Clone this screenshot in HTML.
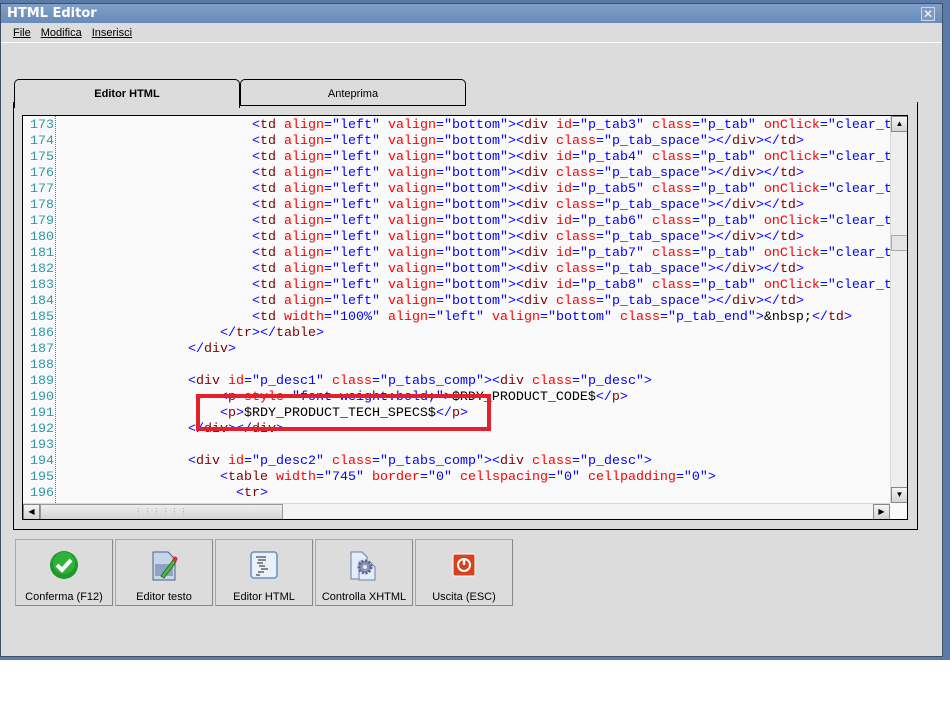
<!DOCTYPE html>
<html><head><meta charset="utf-8"><style>
*{margin:0;padding:0;box-sizing:border-box}
body{width:950px;height:719px;background:#fff;position:relative;overflow:hidden;font-family:"Liberation Sans",sans-serif;font-size:11px;color:#000}
.bgwin{position:absolute;left:0;top:0;width:950px;height:660px;background:#5c7aa6}
.win{position:absolute;left:0;top:3px;width:943px;height:654px;background:#dcdcdc;border:1px solid #3e5068}
.title{position:absolute;left:0;top:0;width:941px;height:19px;background:linear-gradient(#7f9fc8,#6a8cb8);color:#fff;font-weight:bold;font-size:13px;padding:2px 6px;font-family:"DejaVu Sans",sans-serif}
.close{position:absolute;right:7px;top:3px;width:14px;height:14px;border:1px solid #cfd9e6;color:#fff;font-size:12px;line-height:12px;text-align:center;background:#7d9bc4}
.menu{position:absolute;left:0;top:19px;width:941px;height:20px;border-bottom:1px solid #fff;font-size:11px;padding:4px 0 0 12px}
.menu span{margin-right:10px;text-decoration:underline;text-decoration-thickness:1px}
.tab{position:absolute;top:79px;height:27px;border:1px solid #000;border-bottom:none;border-radius:5px 5px 0 0;text-align:center;padding-top:8px;font-size:11px}
.panel{position:absolute;left:13px;top:102px;width:905px;height:428px;border:1px solid #000;border-top:none;background:#dcdcdc}
.code{position:absolute;left:22px;top:115px;width:886px;height:405px;border:1px solid #000;background:#fafafa;overflow:hidden}
.ln{position:absolute;left:0;top:0;width:33px;height:387px;text-align:right;color:#2a9aaa;border-right:1px dotted #2a8aa0;padding-right:1px}
.ln div,.tx div{height:16px;line-height:16px;font-family:"Liberation Mono",monospace;font-size:13.33px;white-space:pre}
.tx{position:absolute;left:37px;top:0;width:830px;height:387px;overflow:hidden;color:#0000ff}
.tx i{font-style:normal;color:#ff0000}.tx u{text-decoration:none;color:#800000}.tx b{font-weight:normal;color:#000}
.ln,.tx{padding-top:2px}
.vs{position:absolute;left:867px;top:0;width:17px;height:387px;background:#eeeeee;border-left:1px solid #d8d8d8}
.hs{position:absolute;left:0;top:387px;width:867px;height:16px;background:#f4f4f4;border-top:1px solid #d8d8d8}
.sb{position:absolute;width:17px;height:16px;background:linear-gradient(#f4f4f4,#d4d4d4);border:1px solid #888;font-size:8px;text-align:center;line-height:14px}
.btn{position:absolute;top:539px;width:98px;height:67px;border:1px solid #a8a8a8;border-right-color:#888;border-bottom-color:#888;background:#dcdcdc;text-align:center;font-size:11px}
.btn .lb{position:absolute;left:0;width:96px;top:51px}
.btn svg{position:absolute;left:33px;top:10px}
.red{position:absolute;left:196px;top:394px;width:295px;height:37px;border:4px solid #e3202b}
</style></head><body>
<div class="bgwin"></div>
<div class="win">
<div class="title">HTML Editor<div class="close">✕</div></div>
<div class="menu"><span>File</span><span>Modifica</span><span>Inserisci</span></div>
</div>
<div class="panel"></div>
<div class="tab" style="left:14px;width:226px;background:#dcdcdc;font-weight:bold;height:29px;z-index:2">Editor HTML</div>
<div class="tab" style="left:240px;width:226px;background:#dcdcdc;border-bottom:1px solid #000">Anteprima</div>
<div class="code">
<div class="ln"><div>173</div><div>174</div><div>175</div><div>176</div><div>177</div><div>178</div><div>179</div><div>180</div><div>181</div><div>182</div><div>183</div><div>184</div><div>185</div><div>186</div><div>187</div><div>188</div><div>189</div><div>190</div><div>191</div><div>192</div><div>193</div><div>194</div><div>195</div><div>196</div></div>
<div class="tx">
<div>                        &lt;<u>td</u> <i>align</i>="left" <i>valign</i>="bottom">&lt;<u>div</u> <i>id</i>="p_tab3" <i>class</i>="p_tab" <i>onClick</i>="clear_t</div>
<div>                        &lt;<u>td</u> <i>align</i>="left" <i>valign</i>="bottom">&lt;<u>div</u> <i>class</i>="p_tab_space">&lt;/<u>div</u>>&lt;/<u>td</u>></div>
<div>                        &lt;<u>td</u> <i>align</i>="left" <i>valign</i>="bottom">&lt;<u>div</u> <i>id</i>="p_tab4" <i>class</i>="p_tab" <i>onClick</i>="clear_t</div>
<div>                        &lt;<u>td</u> <i>align</i>="left" <i>valign</i>="bottom">&lt;<u>div</u> <i>class</i>="p_tab_space">&lt;/<u>div</u>>&lt;/<u>td</u>></div>
<div>                        &lt;<u>td</u> <i>align</i>="left" <i>valign</i>="bottom">&lt;<u>div</u> <i>id</i>="p_tab5" <i>class</i>="p_tab" <i>onClick</i>="clear_t</div>
<div>                        &lt;<u>td</u> <i>align</i>="left" <i>valign</i>="bottom">&lt;<u>div</u> <i>class</i>="p_tab_space">&lt;/<u>div</u>>&lt;/<u>td</u>></div>
<div>                        &lt;<u>td</u> <i>align</i>="left" <i>valign</i>="bottom">&lt;<u>div</u> <i>id</i>="p_tab6" <i>class</i>="p_tab" <i>onClick</i>="clear_t</div>
<div>                        &lt;<u>td</u> <i>align</i>="left" <i>valign</i>="bottom">&lt;<u>div</u> <i>class</i>="p_tab_space">&lt;/<u>div</u>>&lt;/<u>td</u>></div>
<div>                        &lt;<u>td</u> <i>align</i>="left" <i>valign</i>="bottom">&lt;<u>div</u> <i>id</i>="p_tab7" <i>class</i>="p_tab" <i>onClick</i>="clear_t</div>
<div>                        &lt;<u>td</u> <i>align</i>="left" <i>valign</i>="bottom">&lt;<u>div</u> <i>class</i>="p_tab_space">&lt;/<u>div</u>>&lt;/<u>td</u>></div>
<div>                        &lt;<u>td</u> <i>align</i>="left" <i>valign</i>="bottom">&lt;<u>div</u> <i>id</i>="p_tab8" <i>class</i>="p_tab" <i>onClick</i>="clear_t</div>
<div>                        &lt;<u>td</u> <i>align</i>="left" <i>valign</i>="bottom">&lt;<u>div</u> <i>class</i>="p_tab_space">&lt;/<u>div</u>>&lt;/<u>td</u>></div>
<div>                        &lt;<u>td</u> <i>width</i>="100%" <i>align</i>="left" <i>valign</i>="bottom" <i>class</i>="p_tab_end"><b>&amp;nbsp;</b>&lt;/<u>td</u>></div>
<div>                    &lt;/<u>tr</u>>&lt;/<u>table</u>></div>
<div>                &lt;/<u>div</u>></div>
<div> </div>
<div>                &lt;<u>div</u> <i>id</i>="p_desc1" <i>class</i>="p_tabs_comp">&lt;<u>div</u> <i>class</i>="p_desc"></div>
<div>                    &lt;<u>p</u> <i>style</i>="font-weight:bold;"><b>$RDY_PRODUCT_CODE$</b>&lt;/<u>p</u>></div>
<div>                    &lt;<u>p</u>><b>$RDY_PRODUCT_TECH_SPECS$</b>&lt;/<u>p</u>></div>
<div>                &lt;/<u>div</u>>&lt;/<u>div</u>></div>
<div> </div>
<div>                &lt;<u>div</u> <i>id</i>="p_desc2" <i>class</i>="p_tabs_comp">&lt;<u>div</u> <i>class</i>="p_desc"></div>
<div>                    &lt;<u>table</u> <i>width</i>="745" <i>border</i>="0" <i>cellspacing</i>="0" <i>cellpadding</i>="0"></div>
<div>                      &lt;<u>tr</u>></div>
</div>
<div class="vs">
<div class="sb" style="left:0;top:0">▲</div>
<div class="sb" style="left:0;top:119px;height:16px;background:#e4e4e4;border-color:#aaa"></div>
<div class="sb" style="left:0;top:371px">▼</div>
</div>
<div class="hs">
<div class="sb" style="left:0;top:0">◀</div>
<div class="sb" style="left:17px;top:0;width:243px;background:linear-gradient(#eee,#d4d4d4);border-color:#999;color:#aaa;letter-spacing:1px">⋮⋮⋮⋮⋮⋮</div>
<div class="sb" style="left:850px;top:0">▶</div>
</div>
</div>
<div class="red"></div>

<div class="btn" style="left:15px"><svg width="30" height="30" viewBox="0 0 30 30"><circle cx="15" cy="15" r="14" fill="#1f9a2a"/><circle cx="15" cy="13" r="11" fill="#3cc24a" opacity=".6"/><path d="M8 15l5 5 9-10" stroke="#fff" stroke-width="4" fill="none"/></svg><div class="lb">Conferma (F12)</div></div>
<div class="btn" style="left:115px"><svg width="30" height="32" viewBox="0 0 30 32"><path d="M4 2h15l7 7v21H4z" fill="#c8d4e8" stroke="#4a5f8c"/><rect x="6" y="14" width="18" height="12" fill="#8ea2c4"/><path d="M12 26l12-16 3 2-12 16z" fill="#52b840" stroke="#2a6a20"/><circle cx="26" cy="9" r="2.5" fill="#d83030"/></svg><div class="lb">Editor testo</div></div>
<div class="btn" style="left:215px"><svg width="30" height="30" viewBox="0 0 30 30"><rect x="2" y="2" width="26" height="26" rx="3" fill="#e8f0fc" stroke="#6a8cc0" stroke-width="1.5"/><path d="M7 7h10M9 10h8M8 13h6M10 16h6M12 19h7M9 22h6M7 25h4" stroke="#666" stroke-width="1.5"/></svg><div class="lb">Editor HTML</div></div>
<div class="btn" style="left:315px"><svg width="32" height="32" viewBox="0 0 32 32"><path d="M2 2h11l5 5v22H2z" fill="#e4ecf8" stroke="#6a7fa8"/><path d="M10 12h11l5 5v13H10z" fill="#e4ecf8" stroke="#6a7fa8"/><circle cx="16" cy="17" r="6" fill="#8a94b8" stroke="#5a6488" stroke-dasharray="2 1.5" stroke-width="3"/><circle cx="16" cy="17" r="2" fill="#e4ecf8"/></svg><div class="lb">Controlla XHTML</div></div>
<div class="btn" style="left:415px"><svg width="30" height="30" viewBox="0 0 30 30"><rect x="4" y="4" width="22" height="22" rx="2" fill="#d9401c" stroke="#fff"/><circle cx="15" cy="15" r="6" fill="none" stroke="#fff" stroke-width="2"/><path d="M15 8v7" stroke="#fff" stroke-width="2.5"/></svg><div class="lb">Uscita (ESC)</div></div>
</body></html>
